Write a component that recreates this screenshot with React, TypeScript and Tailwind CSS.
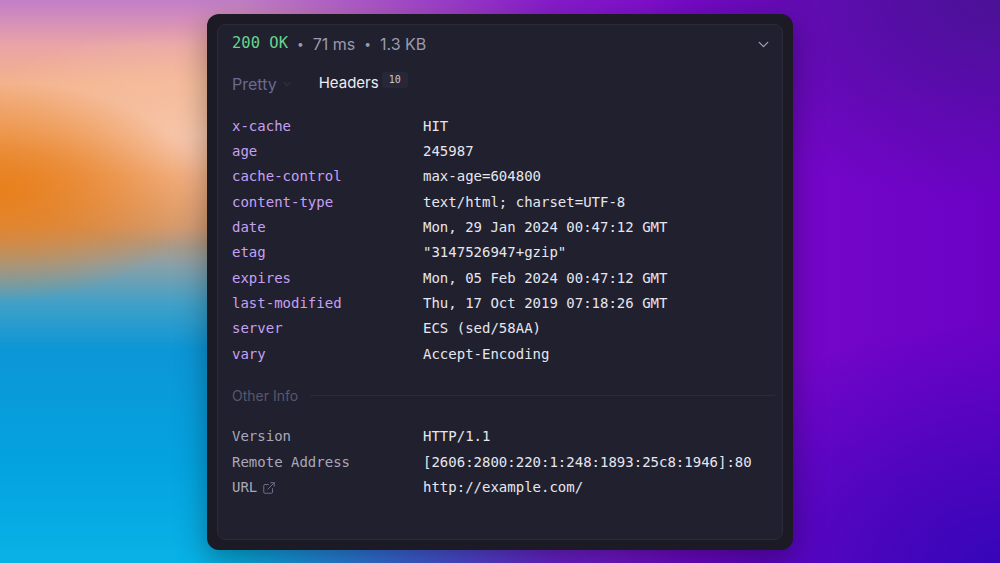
import { ChevronDown, ExternalLink } from "lucide-react";

const headers: [string, string][] = [
  ["x-cache", "HIT"],
  ["age", "245987"],
  ["cache-control", "max-age=604800"],
  ["content-type", "text/html; charset=UTF-8"],
  ["date", "Mon, 29 Jan 2024 00:47:12 GMT"],
  ["etag", "\"3147526947+gzip\""],
  ["expires", "Mon, 05 Feb 2024 00:47:12 GMT"],
  ["last-modified", "Thu, 17 Oct 2019 07:18:26 GMT"],
  ["server", "ECS (sed/58AA)"],
  ["vary", "Accept-Encoding"],
];

const mono = "font-['DejaVu_Sans_Mono','Liberation_Mono',monospace]";
const sans = "font-['Inter','Noto_Sans',sans-serif]";

export default function App() {
  return (
    <div className="flex h-[563px] w-full items-center justify-center overflow-hidden bg-[radial-gradient(ellipse_200px_110px_at_0%_34%,#e8801c_0%,rgba(232,128,28,0.6)_45%,rgba(232,128,28,0)_100%),radial-gradient(ellipse_380px_240px_at_100%_100%,#3606b8_0%,rgba(54,6,184,0)_100%),radial-gradient(ellipse_360px_200px_at_100%_0%,#4a1296_0%,rgba(74,18,150,0)_100%),radial-gradient(ellipse_240px_110px_at_20%_24%,#f7c6ac_0%,rgba(247,198,172,0.5)_50%,rgba(247,198,172,0)_100%),linear-gradient(90deg,rgba(124,10,204,0)_24%,rgba(124,10,204,0.85)_55%,#7a08cc_70%,#6a02c4_100%),linear-gradient(180deg,#c27ec8_0%,#e9a4a6_8%,#f3b28a_15%,#f2aa78_24%,#e98f4a_31%,#cf9466_40%,#8aa0a8_47%,#40a0c8_54%,#0c96d6_62%,#04a2e0_82%,#08b2e6_100%)]">
      <div className="flex h-[536px] w-[586px] rounded-[12px] bg-[#1b1a25] p-[10px] shadow-[0_10px_30px_rgba(0,0,0,0.35)]">
        <div className={`flex flex-1 flex-col rounded-[8px] border border-[#2b2a3a] bg-[#21202e] px-[14px] ${sans}`}>
          <div className="flex h-[39px] items-center justify-between">
            <div className="flex items-center text-[16px] text-[#9b9aae]">
              <span className={`${mono} text-[15.5px] text-[#66d38e]`}>200 OK</span>
              <span className="mx-[9px] text-[12px]">•</span>
              <span>71 ms</span>
              <span className="mx-[9px] text-[12px]">•</span>
              <span>1.3 KB</span>
            </div>
            <ChevronDown size={17} strokeWidth={1.8} className="mr-[-4px] text-[#a2a1b8]" />
          </div>

          <div className="mt-[5px] flex h-[30px] items-center">
            <div className="flex items-center text-[16px] text-[#6b6a8e]">
              <span>Pretty</span>
              <ChevronDown size={12} strokeWidth={1.5} className="ml-[4px] text-[#44435a]" />
            </div>
            <div className="ml-[26px] flex items-center text-[15px] text-[#ececf2]">
              <span>Headers</span>
              <span className={`ml-[3px] mt-[-8px] rounded-[3px] bg-[#282737] px-[7px] py-[1px] ${mono} text-[10px] leading-[14px] text-[#c8c7d4]`}>10</span>
            </div>
          </div>

          <div className={`mt-[15px] ${mono} text-[14px]`}>
            {headers.map(([k, v]) => (
              <div key={k} className="flex h-[25.35px] items-center">
                <span className="w-[191px] shrink-0 text-[#c6a0f4]">{k}</span>
                <span className="text-[#e6e6ee]">{v}</span>
              </div>
            ))}
          </div>

          <div className="mt-[19px] flex h-[20px] items-center gap-[12px]">
            <span className="text-[14px] text-[#58576f]">Other Info</span>
            <div className="mr-[-7px] h-px flex-1 bg-[#2c2b3b]" />
          </div>

          <div className={`mt-[18px] ${mono} text-[14px]`}>
            <div className="flex h-[25.5px] items-center">
              <span className="w-[191px] shrink-0 text-[#a9a8bb]">Version</span>
              <span className="text-[#e6e6ee]">HTTP/1.1</span>
            </div>
            <div className="flex h-[25.5px] items-center">
              <span className="w-[191px] shrink-0 text-[#a9a8bb]">Remote Address</span>
              <span className="text-[#e6e6ee]">[2606:2800:220:1:248:1893:25c8:1946]:80</span>
            </div>
            <div className="flex h-[25.5px] items-center">
              <span className="flex w-[191px] shrink-0 items-center text-[#a9a8bb]">
                URL
                <ExternalLink size={14} strokeWidth={1.6} className="ml-[5px] text-[#74738c]" />
              </span>
              <span className="text-[#e6e6ee]">http://example.com/</span>
            </div>
          </div>
        </div>
      </div>
    </div>
  );
}
